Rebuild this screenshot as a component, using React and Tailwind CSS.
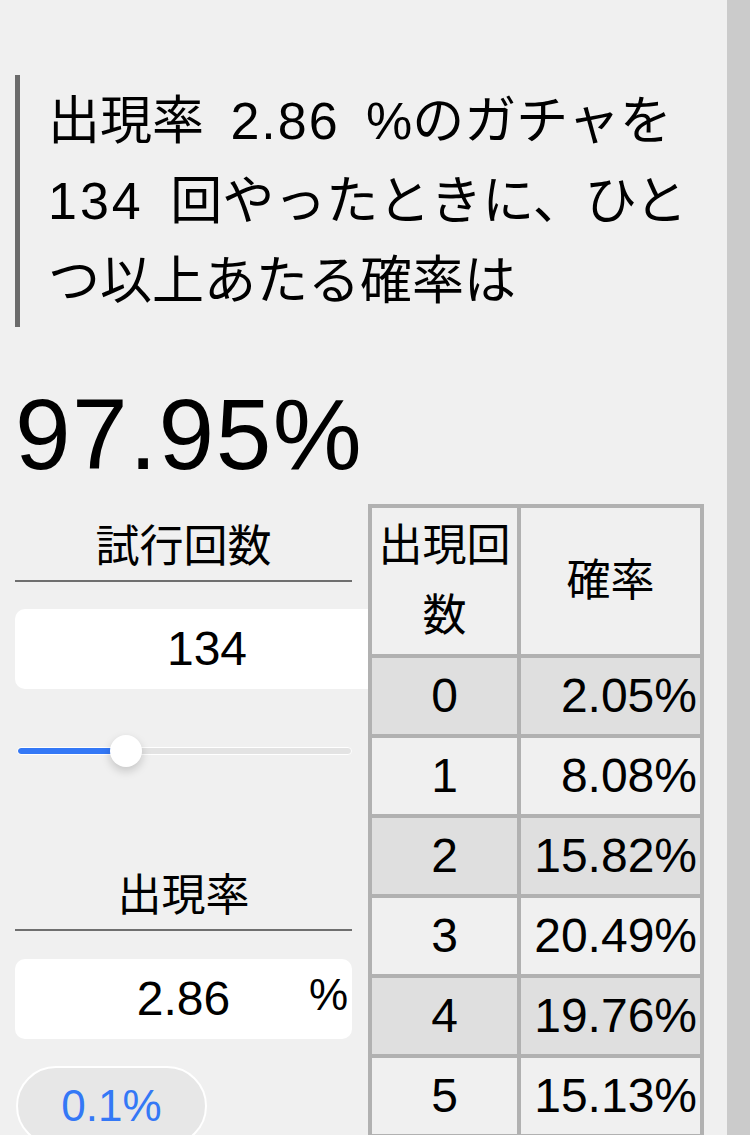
export default function App() {
  const rows = [
    ["0", "2.05%"],
    ["1", "8.08%"],
    ["2", "15.82%"],
    ["3", "20.49%"],
    ["4", "19.76%"],
    ["5", "15.13%"],
  ];
  return (
    <div className="flex h-[1135px] w-[750px] overflow-hidden bg-[#f0f0f0] text-black font-['Liberation_Sans','Noto_Sans_CJK_JP',sans-serif]">
      <div className="w-[727px] shrink-0 pl-[15px] pt-[75px]">
        <div className="border-l-[5px] border-[#6b6b6b] pl-[28px] py-[6px] text-[52px] leading-[80px] [word-spacing:12px]">
          出現率 <span className="tracking-[2px]">2.86</span> %のガチャを
          <br />
          <span className="tracking-[3px]">134</span> 回やったときに、ひと
          <br />
          つ以上あたる確率は
        </div>
        <div className="mt-[57px] text-[100px] leading-[100px] tracking-[1.5px]">97.95%</div>
        <div className="mt-[20px] flex items-start gap-[16px]">
          <div className="w-[337px] shrink-0">
            <div className="mt-[10px] border-b-2 border-[#6f6f6f] text-center text-[44px] leading-[66px]">
              試行回数
            </div>
            <div className="mt-[27px] flex h-[80px] w-[384px] items-center justify-center rounded-[10px] bg-white text-[48px]">
              134
            </div>
            <div className="relative mt-[46px] flex h-[32px] items-center pl-[2px]">
              <div className="flex h-[8px] w-full overflow-hidden rounded-full border border-white bg-[#e3e3e3]">
                <div className="h-full w-[108px] rounded-full bg-[#3478f6]" />
              </div>
              <div className="absolute left-[95px] top-0 h-[32px] w-[32px] rounded-full bg-white shadow-[0_4px_10px_rgba(0,0,0,0.18)]" />
            </div>
            <div className="mt-[96px] border-b-2 border-[#6f6f6f] text-center text-[44px] leading-[66px]">
              出現率
            </div>
            <div className="relative mt-[28px] flex h-[80px] w-full items-center justify-center rounded-[10px] bg-white text-[48px]">
              2.86
              <span className="absolute right-[4px] top-[14px] text-[44px] leading-none">%</span>
            </div>
            <div className="ml-[1px] mt-[27px] flex h-[80px] w-[191px] items-center justify-center rounded-full border-2 border-white bg-[#e7e7e7] text-[44px] text-[#3478f6]">
              0.1%
            </div>
          </div>
          <table className="relative z-10 w-[336px] shrink-0 table-fixed border-separate border-spacing-0 border-2 border-[#b1b1b1] bg-[#f0f0f0]">
            <thead>
              <tr className="bg-[#f0f0f0]">
                <th className="h-[150px] w-[149px] border-2 border-[#b1b1b1] p-0 text-[44px] font-normal leading-[70px]">
                  出現回数
                </th>
                <th className="h-[150px] border-2 border-[#b1b1b1] p-0 text-[44px] font-normal leading-[70px]">
                  確率
                </th>
              </tr>
            </thead>
            <tbody>
              {rows.map(([n, p], i) => (
                <tr key={n} className={i % 2 === 0 ? "bg-[#dfdfdf]" : "bg-[#f0f0f0]"}>
                  <td className="h-[80px] border-2 border-[#b1b1b1] p-0 text-center text-[48px] leading-[76px]">
                    {n}
                  </td>
                  <td className="h-[80px] border-2 border-[#b1b1b1] p-0 pr-[3px] text-right text-[48px] leading-[76px]">
                    {p}
                  </td>
                </tr>
              ))}
            </tbody>
          </table>
        </div>
      </div>
      <div className="h-full w-[23px] shrink-0 bg-[#cbcbcb]" />
    </div>
  );
}
